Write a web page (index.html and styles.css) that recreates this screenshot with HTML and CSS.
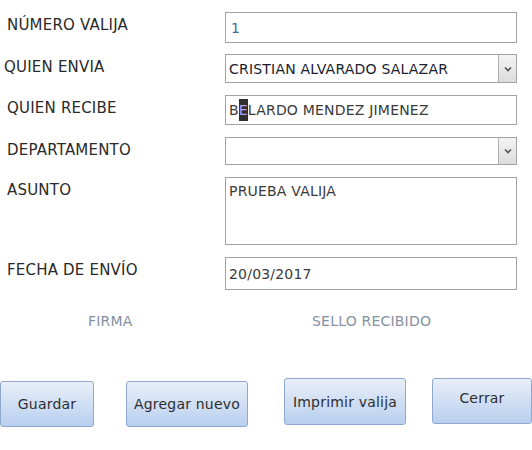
FILE: index.html
```html
<!DOCTYPE html>
<html lang="es">
<head>
<meta charset="utf-8">
<title>Valija</title>
<link rel="stylesheet" href="styles.css">
</head>
<body>
<div class="form">
  <div class="row r1">
    <div class="label">NÚMERO VALIJA</div>
    <div class="field h31 blue">1</div>
  </div>
  <div class="row r2">
    <div class="label shift">QUIEN ENVIA</div>
    <div class="field select h29 dark">
      <span class="val">CRISTIAN ALVARADO SALAZAR</span>
      <span class="arrow"><svg width="8" height="6" viewBox="0 0 8 6"><path d="M1 1.5 L4 4.5 L7 1.5" fill="none" stroke="#555" stroke-width="1.6"/></svg></span>
    </div>
  </div>
  <div class="row r3">
    <div class="label">QUIEN RECIBE</div>
    <div class="field h30 grey">B<span class="sel">E</span>LARDO MENDEZ JIMENEZ</div>
  </div>
  <div class="row r4">
    <div class="label">DEPARTAMENTO</div>
    <div class="field select h28">
      <span class="val"></span>
      <span class="arrow"><svg width="8" height="6" viewBox="0 0 8 6"><path d="M1 1.5 L4 4.5 L7 1.5" fill="none" stroke="#555" stroke-width="1.6"/></svg></span>
    </div>
  </div>
  <div class="row r5">
    <div class="label">ASUNTO</div>
    <div class="field area grey">PRUEBA VALIJA</div>
  </div>
  <div class="row r6">
    <div class="label">FECHA DE ENVÍO</div>
    <div class="field h33 grey">20/03/2017</div>
  </div>
</div>
<div class="sign">
  <span class="firma">FIRMA</span>
  <span class="sello">SELLO RECIBIDO</span>
</div>
<div class="buttons">
  <div class="btn b1">Guardar</div>
  <div class="btn b2">Agregar nuevo</div>
  <div class="btn b3">Imprimir valija</div>
  <div class="btn b4">Cerrar</div>
</div>
</body>
</html>
```
FILE: styles.css
```css
html, body {
  margin: 0;
  padding: 0;
  background: #fff;
}
body {
  width: 532px;
  height: 450px;
  overflow: hidden;
  font-family: "DejaVu Sans", sans-serif;
  font-size: 15px;
  letter-spacing: 0.2px;
  color: #1e1e1e;
}
.form {
  display: flex;
  flex-direction: column;
  gap: 11px;
  padding-top: 12px;
}
.row {
  display: grid;
  grid-template-columns: 225px 292px;
  align-items: start;
}
.label {
  padding-left: 7px;
  padding-top: 4px;
  line-height: 18px;
  color: #2a2a2a;
}
.label.shift { padding-left: 4px; }
.r3 { margin-top: 1px; }
.r4 { margin-top: 1px; }
.r5 { margin-top: 1px; }
.r6 { margin-top: 1px; }
.field {
  box-sizing: border-box;
  border: 1px solid #a3a3a3;
  background: #fff;
  padding: 0 3px;
  display: flex;
  align-items: center;
  white-space: nowrap;
  font-size: 14px;
}
.h31 { height: 31px; }
.h29 { height: 29px; }
.h30 { height: 30px; }
.h28 { height: 28px; }
.h33 { height: 33px; }
.area {
  height: 68px;
  align-items: flex-start;
  padding-top: 5px;
}
.blue { color: #4a6a96; padding-left: 5px; }
.dark { color: #1a2230; }
.grey { color: #3a3a3a; }
.select {
  padding-right: 0;
  justify-content: space-between;
  align-items: stretch;
}
.select .val {
  display: flex;
  align-items: center;
}
.arrow {
  width: 17px;
  border-left: 1px solid #b0b0b0;
  background: linear-gradient(#f4f4f4, #dcdcdc);
  display: flex;
  align-items: center;
  justify-content: center;
}
.sel {
  background: #2f2f2f;
  color: #b9a0ff;
  padding: 3px 0;
}
.sign {
  position: relative;
  height: 40px;
  margin-top: 22px;
  color: #8591a2;
  font-size: 14px;
}
.firma {
  position: absolute;
  left: 88px;
  top: 1px;
}
.sello {
  position: absolute;
  left: 312px;
  top: 1px;
}
.buttons {
  display: flex;
  align-items: flex-start;
  margin-top: 26px;
}
.btn {
  box-sizing: border-box;
  border: 1px solid #8ea8cf;
  border-radius: 3px;
  background: linear-gradient(#e9eff9, #b8cfee);
  color: #2e2e2e;
  display: flex;
  align-items: center;
  justify-content: center;
  white-space: nowrap;
  font-size: 14px;
}
.b1 { width: 94px; height: 46px; margin-top: 3px; }
.b2 { width: 122px; height: 46px; margin-left: 32px; margin-top: 3px; }
.b3 { width: 122px; height: 47px; margin-left: 36px; }
.b4 { width: 100px; height: 46px; margin-left: 26px; padding-bottom: 6px; }
```
